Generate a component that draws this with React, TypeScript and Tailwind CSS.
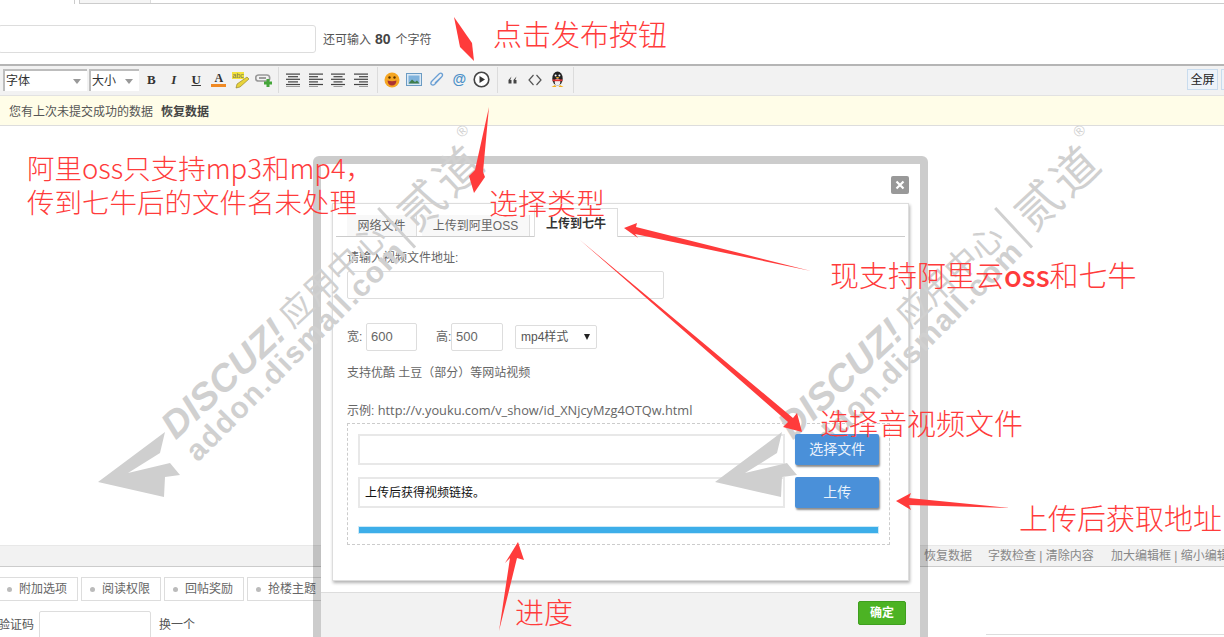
import type { ReactNode } from "react";

const CJK = "font-['Liberation_Sans','Noto_Sans_CJK_SC',sans-serif]";

function ToolIcon({ children }: { children: ReactNode }) {
  return <div className="flex h-[22px] w-[22.5px] shrink-0 items-center justify-center">{children}</div>;
}

function Divider({ className = "" }: { className?: string }) {
  return <div className={`mx-[3px] h-[26px] w-px shrink-0 bg-[#dcdcdc] ${className}`} />;
}

// each row is [x, width] inside a 14px box
function Align({ rows }: { rows: [number, number][] }) {
  return (
    <svg width="14" height="14" viewBox="0 0 14 14">
      {rows.map(([x, w], i) => (
        <rect key={i} x={x} y={0.5 + i * 2.6} width={w} height="1.2" fill="#444" />
      ))}
    </svg>
  );
}

function EditorToolbar() {
  return (
    <div className="flex h-[32px] items-center border-t-2 border-b border-t-[#b5b5b5] border-b-[#e2e2e2] bg-[#f2f2f2] pb-[2px] pl-[3px]">
      <div className="flex h-[22px] w-[84px] items-center justify-between border-2 border-b-0 border-r-0 border-[#bdbdbd] bg-white pl-[1px] pr-[6px] text-[12px] text-[#333]">
        字体
        <span className="mt-[2px] border-x-[4px] border-t-[5px] border-x-transparent border-t-[#999]" />
      </div>
      <div className="ml-[2px] flex h-[22px] w-[50px] items-center justify-between border-2 border-b-0 border-r-0 border-[#bdbdbd] bg-white pl-[1px] pr-[6px] text-[12px] text-[#333]">
        大小
        <span className="mt-[2px] border-x-[4px] border-t-[5px] border-x-transparent border-t-[#999]" />
      </div>
      <div className="ml-[1px] flex items-center">
        <ToolIcon><span className="font-['Liberation_Serif',serif] text-[13px] font-bold text-[#333]">B</span></ToolIcon>
        <ToolIcon><span className="font-['Liberation_Serif',serif] text-[13px] font-bold italic text-[#333]">I</span></ToolIcon>
        <ToolIcon><span className="font-['Liberation_Serif',serif] text-[13px] font-bold text-[#333] underline">U</span></ToolIcon>
        <ToolIcon>
          <div className="flex flex-col items-center">
            <span className="font-['Liberation_Serif',serif] text-[12px] leading-[12px] font-bold text-[#333]">A</span>
            <span className="h-[3px] w-[15px] bg-[#f08a24]" />
          </div>
        </ToolIcon>
        <ToolIcon>
          <svg width="18" height="18" viewBox="0 0 18 18">
            <rect x="0" y="1" width="12" height="7" fill="#f3e23a" />
            <path d="M15 6 L17 8 L8 16 L4 17 L5 13 Z" fill="#e8d33a" stroke="#8a7a20" strokeWidth="0.6" />
            <text x="0.5" y="7" fontSize="7" fill="#775">abc</text>
          </svg>
        </ToolIcon>
        <ToolIcon>
          <svg width="18" height="16" viewBox="0 0 18 16">
            <rect x="0.7" y="3" width="14" height="6" rx="3" fill="none" stroke="#999" strokeWidth="1.6" />
            <path d="M4 6 H11" stroke="#777" strokeWidth="1.4" />
            <path d="M13 7 V15 M9 11 H17" stroke="#45a63a" strokeWidth="3" />
          </svg>
        </ToolIcon>
      </div>
      <Divider />
      <div className="flex items-center">
        <ToolIcon><Align rows={[[0, 14], [2, 10], [0, 14], [2, 10], [0, 14], [0, 14]]} /></ToolIcon>
        <ToolIcon><Align rows={[[0, 14], [0, 9], [0, 14], [0, 9], [0, 14], [0, 9]]} /></ToolIcon>
        <ToolIcon><Align rows={[[0, 14], [2.5, 9], [0, 14], [2.5, 9], [0, 14], [2.5, 9]]} /></ToolIcon>
        <ToolIcon><Align rows={[[0, 14], [5, 9], [0, 14], [5, 9], [0, 14], [5, 9]]} /></ToolIcon>
      </div>
      <Divider className="ml-[4.5px]" />
      <div className="flex items-center">
        <ToolIcon>
          <svg width="16" height="16" viewBox="0 0 16 16">
            <circle cx="8" cy="8" r="7.5" fill="#f5a623" />
            <circle cx="5.5" cy="5.5" r="1.2" fill="#5a3200" />
            <circle cx="10.5" cy="5.5" r="1.2" fill="#5a3200" />
            <path d="M3.5 8.5 Q8 10 12.5 8.5 Q12 13.5 8 13.5 Q4 13.5 3.5 8.5 Z" fill="#a33" />
          </svg>
        </ToolIcon>
        <ToolIcon>
          <svg width="16" height="13" viewBox="0 0 16 13">
            <rect x="0.5" y="0.5" width="15" height="12" fill="#dbe9f5" stroke="#6b9bc3" />
            <rect x="2.5" y="2.5" width="11" height="8" fill="#7fb2dc" />
            <path d="M2.5 10.5 L6 6.5 L9 9 L11 7.5 L13.5 10.5 Z" fill="#3e7d4a" />
          </svg>
        </ToolIcon>
        <ToolIcon>
          <svg width="15" height="16" viewBox="0 0 15 16">
            <path d="M12.5 5 L6 12 Q4 14 2.5 12.6 Q1 11 3 9 L10 2 Q11.8 0.5 13 1.8 Q14.3 3.2 12.5 5 L6 11" fill="none" stroke="#6a9fd4" strokeWidth="1.3" />
          </svg>
        </ToolIcon>
        <ToolIcon><span className="text-[14px] font-bold text-[#4a90c8]">@</span></ToolIcon>
        <ToolIcon>
          <svg width="17" height="17" viewBox="0 0 17 17">
            <circle cx="8.5" cy="8.5" r="7.3" fill="#fff" stroke="#444" strokeWidth="1.6" />
            <path d="M6.5 5 L12 8.5 L6.5 12 Z" fill="#333" />
          </svg>
        </ToolIcon>
      </div>
      <Divider className="ml-[4px]" />
      <div className="flex items-center">
        <ToolIcon>
          <svg width="9" height="8" viewBox="0 0 9 8">
            <path d="M3.5 0.5 L0.5 4 V7.5 H3.5 V4 H2.2 Z M8.5 0.5 L5.5 4 V7.5 H8.5 V4 H7.2 Z" fill="#444" />
          </svg>
        </ToolIcon>
        <ToolIcon>
          <svg width="14" height="12" viewBox="0 0 14 12">
            <path d="M5.5 1 L1 6 L5.5 11 M8.5 1 L13 6 L8.5 11" fill="none" stroke="#555" strokeWidth="1.2" />
          </svg>
        </ToolIcon>
        <ToolIcon>
          <svg width="15" height="17" viewBox="0 0 15 17">
            <ellipse cx="7.5" cy="7.5" rx="5.2" ry="7" fill="#222" />
            <ellipse cx="7.5" cy="11" rx="2.8" ry="3.6" fill="#eee" />
            <circle cx="5.6" cy="4.6" r="1" fill="#fff" />
            <circle cx="9.4" cy="4.6" r="1" fill="#fff" />
            <path d="M5.5 6 H9.5 L7.5 7.6 Z" fill="#f3b01c" />
            <path d="M2.6 8.4 H12.4 V10.2 H2.6 Z" fill="#d33" />
            <path d="M1.5 16 H6.5 L5 14 Z M10 14 L13.5 16 H8.5 Z" fill="#f3b01c" />
          </svg>
        </ToolIcon>
      </div>
      <Divider className="ml-[4.5px]" />
      <div className="ml-auto flex h-[21px] w-[31px] items-center justify-center border border-[#c9dcee] bg-[#eef3f9] text-[12px] text-[#222]">全屏</div>
      <div className="ml-[3px] h-[21px] w-[3px] shrink-0 border-y border-l border-[#c9dcee] bg-[#eef3f9]" />
    </div>
  );
}

function Watermark({ shift }: { shift: string }) {
  return (
    <div className={`pointer-events-none absolute top-0 z-20 h-full w-[500px] ${shift}`}>
      <svg className="absolute left-[98px] top-[425px]" width="90" height="80" viewBox="98 425 90 80">
        <polygon points="165,432 160,453 128,473 170,463 180,475 165,477 164,497 98,482" fill="#cfcfcf" />
      </svg>
      <div className="absolute left-[167px] top-[401px] flex h-[60px] origin-left rotate-[-43deg] items-center whitespace-nowrap font-['Liberation_Sans','Noto_Sans_CJK_SC',sans-serif] text-[#d0d0d0]">
        <span className="text-[38px] font-bold italic">DISCUZ!</span>
        <span className="ml-[7px] mr-[16px] text-[33px]">应用中心</span>
        <span className="relative top-[8px] ml-[-4px] h-[54px] w-[3px] bg-[#d0d0d0]" />
        <span className="relative top-[9px] ml-[9px] text-[46px] tracking-[4px]">贰道</span>
        <span className="relative -top-[18px] -ml-[2px] text-[15px]">®</span>
      </div>
      <div className="absolute left-[190px] top-[435px] flex h-[40px] origin-left rotate-[-45deg] items-center whitespace-nowrap font-['Liberation_Sans',sans-serif] text-[30px] font-bold tracking-[1.5px] text-[#d0d0d0]">
        addon.dismall.com
      </div>
    </div>
  );
}

function Note({ className, children }: { className: string; children: ReactNode }) {
  return (
    <div className={`absolute z-40 whitespace-nowrap font-['Noto_Sans_CJK_SC',sans-serif] leading-[34px] font-light text-[#ff3b3b] ${className}`}>
      {children}
    </div>
  );
}

function Arrows() {
  const shapes = [
    "454,17 472,43 474,61 460,47",
    "489,107 483,172 485,177 474,193 469,176 475,170",
    "624,228 637,223 636,227 811,271 635,234 638,238",
    "580,240 793,418 797,413 802,432 783,427 788,422",
    "896,501 911,493 909,498 1010,508 909,505 911,510",
    "518,542 524,560 517,558 499,631 510,558 505,563",
  ];
  return (
    <svg className="pointer-events-none absolute left-0 top-0 z-40" width="1224" height="637" viewBox="0 0 1224 637">
      {shapes.map((p) => (
        <polygon key={p} points={p} fill="#ff3b3b" />
      ))}
    </svg>
  );
}

function VideoDialog() {
  return (
    <div className="absolute left-[313px] top-[156px] flex h-[496px] w-[615px] flex-col rounded-[6px] border-8 border-black/20 bg-white bg-clip-padding">
      <div className="relative flex-1 px-[11px] pt-[39px]">
        <button className="absolute right-[11px] top-[12px] flex h-[18px] w-[18px] items-center justify-center rounded-[2px] bg-[#999]">
          <svg width="10" height="10" viewBox="0 0 10 10">
            <path d="M1.5 1.5 L8.5 8.5 M8.5 1.5 L1.5 8.5" stroke="#fff" strokeWidth="2.2" />
          </svg>
        </button>
        <div className="h-[378px] border border-[#ddd] bg-white px-[3px] pt-[4px] shadow-[1px_2px_3px_rgba(0,0,0,0.3)]">
          <div className="flex h-[29px] items-end border-b border-[#ccc] pl-[11px] text-[12px]">
            <div className="flex h-[21px] w-[70px] items-center justify-center border-r border-[#ddd] bg-[#f8f8f8] text-[#666]">网络文件</div>
            <div className="ml-[5px] flex h-[21px] w-[108px] items-center justify-center border-r border-[#ddd] bg-[#f8f8f8] text-[#666]">上传到阿里OSS</div>
            <div className="relative top-px ml-[4px] flex h-[29px] w-[84px] items-center justify-center border-x border-t border-[#ddd] bg-white pt-[2px] font-bold text-[#333]">上传到七牛</div>
          </div>
          <div className="px-[11px] text-[12px] text-[#666]">
            <div className="mt-[13px] leading-[16px]">请输入视频文件地址:</div>
            <div className="mt-[5px] h-[28px] w-[317px] rounded-[2px] border border-[#ddd]" />
            <div className="mt-[24px] flex h-[28px] items-center">
              <span className="w-[19px]">宽:</span>
              <div className="flex h-[28px] w-[51px] items-center rounded-[2px] border border-[#ddd] pl-[4px] text-[13px]">600</div>
              <span className="ml-[19px] w-[15px]">高:</span>
              <div className="flex h-[28px] w-[52px] items-center rounded-[2px] border border-[#ddd] pl-[4px] text-[13px]">500</div>
              <div className="ml-[12px] flex h-[24px] w-[82px] items-center justify-between rounded-[2px] border border-[#ddd] pl-[5px] pr-[6px] text-[12px] text-[#555]">
                mp4样式
                <span className="border-x-[3.5px] border-t-[6px] border-x-transparent border-t-[#222]" />
              </div>
            </div>
            <div className="mt-[14px] leading-[16px]">支持优酷 土豆（部分）等网站视频</div>
            <div className="mt-[21px] leading-[16px]">
              示例: <span className="font-['Open_Sans',sans-serif] text-[12.8px]">http://v.youku.com/v_show/id_XNjcyMzg4OTQw.html</span>
            </div>
            <div className="mt-[4px] h-[122px] w-[543px] border border-dashed border-[#ccc] px-[10px] pt-[10px]">
              <div className="flex gap-[10px]">
                <div className="h-[31px] w-[429px] border-2 border-[#e8e8e8]" />
                <button className="relative z-30 h-[31px] w-[84px] rounded-[2px] bg-[#4a90d9] text-[14px] text-[#eaf2fb] shadow-[1px_2px_2px_rgba(0,0,0,0.45)]">选择文件</button>
              </div>
              <div className="mt-[12px] flex gap-[10px]">
                <div className="flex h-[31px] w-[429px] items-center border-2 border-[#e8e8e8] bg-white pl-[5px] text-[12px] text-[#111]">上传后获得视频链接。</div>
                <button className="relative z-30 h-[31px] w-[84px] rounded-[2px] bg-[#4a90d9] text-[14px] text-[#eaf2fb] shadow-[1px_2px_2px_rgba(0,0,0,0.45)]">上传</button>
              </div>
              <div className="mt-[18px] h-[8px] w-[521px] border border-[#cdeaf8] bg-[#3daee9]" />
            </div>
          </div>
        </div>
      </div>
      <div className="flex h-[52px] shrink-0 items-start justify-end border-t border-[#ddd] bg-[#f2f2f2] pr-[14px] pt-[8px]">
        <div className="relative z-30 flex h-[24px] w-[48px] items-center justify-center rounded-[2px] border border-[#3f9f1f] bg-[#4cb324] text-[12px] font-bold text-white">确定</div>
      </div>
    </div>
  );
}

export default function App() {
  const bottomTabs = ["附加选项", "阅读权限", "回帖奖励", "抢楼主题"];
  return (
    <div className={`relative h-[637px] w-[1224px] overflow-hidden bg-white ${CJK}`}>
      <div className="flex h-[4px]">
        <div className="w-[75px] border-r border-[#ccc]" />
        <div className="ml-[4px] flex flex-1 border-b border-l border-[#ccc]">
          <div className="w-[71px] border-r border-[#ddd] bg-[#f5f5f5]" />
        </div>
      </div>

      <div className="mt-[21px] flex items-center">
        <div className="-ml-[2px] h-[28px] w-[318px] rounded-[3px] border border-[#ddd]" />
        <span className="ml-[7px] text-[12px] text-[#555]">
          还可输入<b className="ml-[4px] mr-[5px] text-[14px] text-[#444]">80</b>个字符
        </span>
      </div>

      <div className="mt-[11px]">
        <EditorToolbar />
        <div className="flex h-[30px] items-center border-b border-[#ddd] bg-[#fffde8] pl-[9px] pt-[3px] text-[12px] text-[#555]">
          您有上次未提交成功的数据<b className="ml-[8px] text-[#444]">恢复数据</b>
        </div>
      </div>

      <div className="h-[419px]" />

      <div className="flex h-[22px] items-center border-y border-t-[#e8e8e8] border-b-[#ccc] bg-[#f2f2f2] text-[12px] whitespace-nowrap text-[#888]">
        <span className="absolute left-[924px]">恢复数据</span>
        <span className="absolute left-[988px]">字数检查 | 清除内容</span>
        <span className="absolute left-[1111px]">加大编辑框 | 缩小编辑框</span>
      </div>

      <div className="-ml-[2px] mt-[10px] flex gap-[3px]">
        {bottomTabs.map((t) => (
          <div key={t} className="flex h-[24px] w-[80px] items-center border border-[#ddd] pl-[8px] text-[12px] text-[#666]">
            <span className="h-[5px] w-[5px] rounded-full bg-[#bbb]" />
            <span className="ml-[7px]">{t}</span>
          </div>
        ))}
      </div>

      <div className="mt-[10px] flex items-start text-[12px] text-[#555]">
        <span className="-ml-[2px] mt-[5px]">验证码</span>
        <div className="ml-[5px] h-[30px] w-[112px] rounded-[2px] border border-[#ddd]" />
        <span className="ml-[8px] mt-[5px]">换一个</span>
        <div className="absolute left-[986px] top-[634px] h-px w-[238px] bg-[#ddd]" />
      </div>

      <VideoDialog />

      <Watermark shift="left-0" />
      <Watermark shift="left-[617px]" />

      <Arrows />
      <Note className="left-[493px] top-[16px] text-[29px]">点击发布按钮</Note>
      <Note className="left-[27px] top-[150px] text-[27.5px]">阿里oss只支持mp3和mp4，</Note>
      <Note className="left-[27px] top-[184px] text-[27.5px]">传到七牛后的文件名未处理</Note>
      <Note className="left-[489px] top-[185px] text-[29px]">选择类型</Note>
      <Note className="left-[830px] top-[257px] text-[29px]">现支持阿里云<span className="font-medium">oss</span>和七牛</Note>
      <Note className="left-[820px] top-[405px] text-[29px]">选择音视频文件</Note>
      <Note className="left-[1019px] top-[500px] text-[29px]">上传后获取地址</Note>
      <Note className="left-[515px] top-[594px] text-[29px]">进度</Note>
    </div>
  );
}
